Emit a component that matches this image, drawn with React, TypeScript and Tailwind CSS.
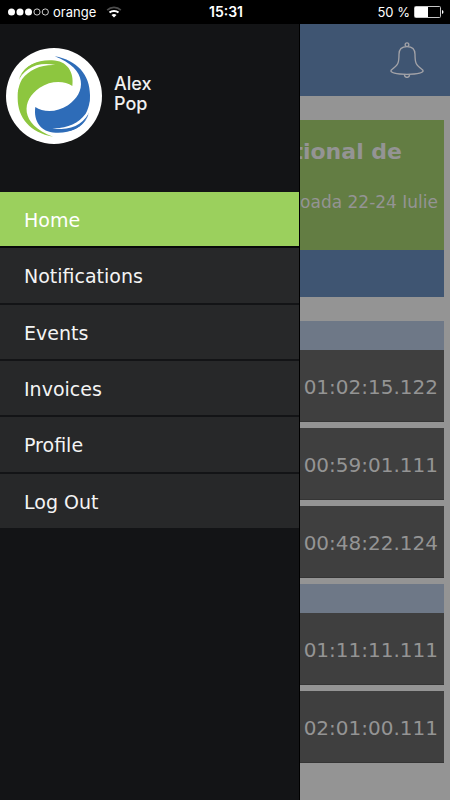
const menu = ["Home", "Notifications", "Events", "Invoices", "Profile", "Log Out"];

const groups = [
  { id: "first", times: ["01:02:15.122", "00:59:01.111", "00:48:22.124"] },
  { id: "second", times: ["01:11:11.111", "02:01:00.111"] },
];

function StatusBar() {
  return (
    <div className="grid h-6 grid-cols-3 items-center bg-black pr-1.5 pl-2 font-['Inter',sans-serif] text-[13px] leading-4 text-white">
      <div className="flex items-center gap-1">
        <svg className="h-2 w-[41px]" viewBox="0 0 41 8" aria-hidden="true">
          <g fill="white">
            <circle cx="3.5" cy="4" r="3.5" />
            <circle cx="12" cy="4" r="3.5" />
            <circle cx="20.5" cy="4" r="3.5" />
          </g>
          <g fill="none" stroke="white" strokeWidth="0.8">
            <circle cx="29" cy="4" r="3.1" />
            <circle cx="37.3" cy="4" r="3.1" />
          </g>
        </svg>
        <span>orange</span>
        <svg className="ml-1.5 h-3 w-4" viewBox="0 0 16 12" fill="none" aria-hidden="true">
          <path d="M1.2 4.1C5 .4 11 .4 14.8 4.1" stroke="#4d4d4d" strokeWidth="1.8" />
          <path d="M3.5 6.6C6 4.3 10 4.3 12.5 6.6" stroke="white" strokeWidth="2" />
          <path d="M5.5 9C7 7.7 9 7.7 10.5 9L8 11.6Z" fill="white" />
        </svg>
      </div>
      <span className="text-center text-[14px] font-semibold">15:31</span>
      <div className="flex items-center justify-end gap-1">
        <span>50 %</span>
        <svg className="h-3 w-[30px]" viewBox="0 0 30 12" aria-hidden="true">
          <rect x="0.5" y="0.5" width="26" height="11" rx="1" fill="none" stroke="#c8c8c8" />
          <rect x="1" y="1" width="13" height="10" fill="white" />
          <path d="M28 4Q29.5 4.5 29.5 6T28 8Z" fill="white" />
        </svg>
      </div>
    </div>
  );
}

function Swirl() {
  return (
    <>
      <path d="M153 278C85 266 47 222 47 162C47 135 50 110 54 98C72 62 108 47 150 49C196 50 217 85 211 126C188 110 148 108 113 131C58 168 52 240 153 278Z" />
      <path d="M47 116C62 76 105 51 160 63C118 61 82 76 60 106C54 116 50 130 47 144L42 144L42 100Z" fill="white" />
      <path d="M50 106C62 74 100 52 144 57C104 45 64 66 50 106Z" />
    </>
  );
}

function Logo() {
  return (
    <svg className="size-24 shrink-0" viewBox="12 12 288 288" role="img" aria-label="Alex Pop">
      <circle cx="156" cy="156" r="144" fill="white" />
      <g fill="#8dc63f">
        <Swirl />
      </g>
      <g fill="#2e6cb8" transform="rotate(180 155.5 157.5)">
        <Swirl />
      </g>
    </svg>
  );
}

function Bell() {
  return (
    <svg className="h-9 w-[34px]" viewBox="301 53 102 108" fill="none" stroke="#a3a3a8" strokeWidth="4" aria-hidden="true">
      <circle cx="352" cy="61" r="5.5" />
      <path d="M352 67C336 67 328 75 328 90C328 117 326 121 305 137C299 145 320 150 352 150C384 150 405 145 399 137C378 121 376 117 376 90C376 75 368 67 352 67Z" fill="#3f5572" />
      <path d="M344 151C345 162 359 162 360 151" />
    </svg>
  );
}

function Drawer() {
  return (
    <aside className="absolute inset-y-0 left-0 w-[300px] border-r border-black bg-[#131416]">
      <div className="flex h-[168px] items-start gap-3 px-1.5 pt-6">
        <Logo />
        <p className="w-16 pt-[26px] font-['Inter',sans-serif] text-[18px] leading-5 font-medium text-[#f0f0f0]">Alex Pop</p>
      </div>
      <nav className="grid h-[338px] grid-rows-6">
        {menu.map((label, index) => (
          <a
            key={label}
            href="#"
            className={
              index === 0
                ? "flex items-center border-b-2 border-[#08090a] bg-[#9bd05d] px-6 pt-0.5 text-[19px] text-white"
                : "flex items-center border-b-2 border-[#131416] bg-[#272829] px-6 pt-0.5 text-[19px] text-[#f4f4f4]"
            }
          >
            {label}
          </a>
        ))}
      </nav>
    </aside>
  );
}

export default function App() {
  return (
    <div className="flex min-h-screen flex-col bg-[#949494] font-['Verdana','DejaVu_Sans',sans-serif]">
      <StatusBar />
      <div className="relative flex-1 overflow-hidden">
        <header className="flex h-[72px] items-center justify-end bg-[#3f5572] px-[26px]">
          <button type="button" aria-label="Notifications">
            <Bell />
          </button>
        </header>
        <main className="px-1.5 py-6 text-[#949494]">
          <section className="text-right">
            <div className="h-[130px] bg-[#637d43] px-1.5 pt-4">
              <h1 className="pr-9 text-[22px] leading-8 font-bold">National de</h1>
              <p className="pt-5 text-[17px] leading-7">Perioada 22-24 Iulie</p>
            </div>
            <div className="h-[47px] bg-[#3f5572]" />
          </section>
          <div className="flex flex-col gap-1.5 pt-6">
            {groups.map((group) => (
              <section key={group.id}>
                <div className="h-[29px] bg-[#6e7887]" />
                <ul className="flex flex-col gap-1.5">
                  {group.times.map((time) => (
                    <li key={time} className="flex h-[72px] items-center justify-end border-b border-[#353535] bg-[#3f3f3f] px-1.5 pt-0.5 text-[20px]">
                      {time}
                    </li>
                  ))}
                </ul>
              </section>
            ))}
          </div>
        </main>
        <Drawer />
      </div>
    </div>
  );
}
